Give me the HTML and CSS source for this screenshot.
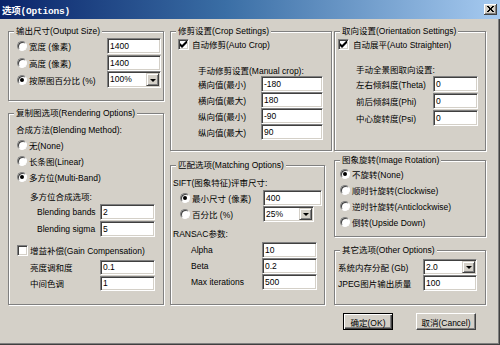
FILE: index.html
```html
<!DOCTYPE html>
<html>
<head>
<meta charset="utf-8">
<link rel="stylesheet" href="styles.css">
</head>
<body>
<div class="win">
  <div class="titlebar">
    <span class="title">选项(Options)</span>
    <span class="close"><svg width="7" height="6" viewBox="0 0 7 6"><path d="M0 0L6 6M1 0L7 6M6 0L0 6M7 0L1 6" stroke="#000" stroke-width="1"/></svg></span>
  </div>
  <div class="cols">
    <div class="col c1">
      <div class="group g-out">
        <span class="gtitle">输出尺寸(Output Size)</span>
        <div class="row r17"><span class="radio"></span><span class="lbl w78">宽度 (像素)</span><span class="field w54">1400</span></div>
        <div class="row r17"><span class="radio"></span><span class="lbl w78">高度 (像素)</span><span class="field w54">1400</span></div>
        <div class="row r17"><span class="radio on"></span><span class="lbl w78">按原图百分比 (%)</span><span class="combo w54 h17"><span class="ctext">100%</span><span class="drop"><i class="tri"></i></span></span></div>
      </div>
      <div class="group g-render">
        <span class="gtitle">复制图选项(Rendering Options)</span>
        <div class="row">合成方法(Blending Method):</div>
        <div class="row ml1"><span class="radio"></span><span class="lbl">无(None)</span></div>
        <div class="row ml1"><span class="radio"></span><span class="lbl">长条图(Linear)</span></div>
        <div class="row ml1"><span class="radio on"></span><span class="lbl">多方位(Multi-Band)</span></div>
        <div class="row ml14 mt3">多方位合成选项:</div>
        <div class="row ml21"><span class="lbl w63">Blending bands</span><span class="field w55">2</span></div>
        <div class="row ml21 mt1"><span class="lbl w63">Blending sigma</span><span class="field w55">5</span></div>
        <div class="row ml1 mt5"><span class="check"></span><span class="lbl">增益补偿(Gain Compensation)</span></div>
        <div class="row ml14 mt1"><span class="lbl w70">亮度调和度</span><span class="field w55 h15">0.1</span></div>
        <div class="row ml14"><span class="lbl w70">中间色调</span><span class="field w55 h15">1</span></div>
      </div>
    </div>
    <div class="col c2">
      <div class="group g-crop">
        <span class="gtitle">修剪设置(Crop Settings)</span>
        <div class="row"><span class="check on"><svg width="7" height="7" viewBox="0 0 7 7"><path d="M0 2v3l2 2 5-5V-1L2 4z" fill="#000"/></svg></span><span class="lbl gap3">自动修剪(Auto Crop)</span></div>
        <div class="row head ml20">手动修剪设置(Manual crop):</div>
        <div class="row ml20"><span class="lbl w63">横向值(最小)</span><span class="field w62">-180</span></div>
        <div class="row ml20"><span class="lbl w63">横向值(最大)</span><span class="field w62">180</span></div>
        <div class="row ml20"><span class="lbl w63">纵向值(最小)</span><span class="field w62">-90</span></div>
        <div class="row ml20"><span class="lbl w63">纵向值(最大)</span><span class="field w62">90</span></div>
      </div>
      <div class="group g-match">
        <span class="gtitle">匹配选项(Matching Options)</span>
        <div class="row">SIFT(图象特征)评审尺寸:</div>
        <div class="row ml7"><span class="radio on"></span><span class="lbl w71">最小尺寸 (像素)</span><span class="field w59">400</span></div>
        <div class="row ml7"><span class="radio"></span><span class="lbl w71">百分比 (%)</span><span class="combo w51 h16"><span class="ctext">25%</span><span class="drop"><i class="tri"></i></span></span></div>
        <div class="row mt3">RANSAC参数:</div>
        <div class="row ml18 mt1"><span class="lbl w71">Alpha</span><span class="field w55">10</span></div>
        <div class="row ml18"><span class="lbl w71">Beta</span><span class="field w55">0.2</span></div>
        <div class="row ml18"><span class="lbl w71">Max iterations</span><span class="field w55">500</span></div>
      </div>
    </div>
    <div class="col c3">
      <div class="group g-orient">
        <span class="gtitle">取向设置(Orientation Settings)</span>
        <div class="row"><span class="check on"><svg width="7" height="7" viewBox="0 0 7 7"><path d="M0 2v3l2 2 5-5V-1L2 4z" fill="#000"/></svg></span><span class="lbl gap4">自动展平(Auto Straighten)</span></div>
        <div class="row head2 ml18">手动全景图取向设置:</div>
        <div class="row r17 ml18"><span class="lbl w77">左右倾斜度(Theta)</span><span class="field w45">0</span></div>
        <div class="row r17 ml18"><span class="lbl w77">前后倾斜度(Phi)</span><span class="field w45">0</span></div>
        <div class="row r17 ml18"><span class="lbl w77">中心旋转度(Psi)</span><span class="field w45">0</span></div>
      </div>
      <div class="group g-rot">
        <span class="gtitle">图象旋转(Image Rotation)</span>
        <div class="row ml2"><span class="radio on"></span><span class="lbl gap3">不旋转(None)</span></div>
        <div class="row ml2"><span class="radio"></span><span class="lbl gap3">顺时针旋转(Clockwise)</span></div>
        <div class="row ml2"><span class="radio"></span><span class="lbl gap3">逆时针旋转(Anticlockwise)</span></div>
        <div class="row ml2"><span class="radio"></span><span class="lbl gap3">倒转(Upside Down)</span></div>
      </div>
      <div class="group g-other">
        <span class="gtitle">其它选项(Other Options)</span>
        <div class="row"><span class="lbl w85">系统内存分配 (Gb)</span><span class="combo w54 h16"><span class="ctext">2.0</span><span class="drop"><i class="tri"></i></span></span></div>
        <div class="row"><span class="lbl w85">JPEG图片输出质量</span><span class="field w54">100</span></div>
      </div>
      <div class="buttons">
        <span class="btn default">确定(OK)</span>
        <span class="btn cancel">取消(Cancel)</span>
      </div>
    </div>
  </div>
</div>
</body>
</html>
```
FILE: styles.css
```css
html, body { margin: 0; padding: 0; }
body {
  width: 500px;
  height: 345px;
  overflow: hidden;
  background: #d4d0c8;
  font-family: "Liberation Sans", "Noto Sans CJK SC", sans-serif;
  font-size: 8.5px;
  color: #000;
}
.win {
  width: 500px;
  height: 345px;
  box-sizing: border-box;
  background: #d4d0c8;
  box-shadow: inset -1px -1px #404040, inset -2px -2px #808080;
}
.titlebar {
  height: 19px;
  display: flex;
  align-items: center;
  background: linear-gradient(to right, #0a246a 0%, #3a6ea5 45%, #a6caf0 100%);
}
.title {
  color: #fff;
  font-family: "Liberation Mono", "Noto Sans CJK SC", monospace;
  font-weight: bold;
  font-size: 9.5px;
  padding-left: 2px;
  letter-spacing: -0.2px;
}
.close {
  margin-left: auto;
  margin-right: 3px;
  width: 13px;
  height: 11px;
  box-sizing: border-box;
  background: #d4d0c8;
  border-right: 1px solid #404040;
  border-bottom: 1px solid #404040;
  box-shadow: inset 1px 1px #fff, inset -1px -1px #808080;
  display: flex;
  align-items: center;
  justify-content: center;
}
.close svg { display: block; }
.cols {
  display: flex;
  padding: 12px 0 0 8px;
}
.col { display: flex; flex-direction: column; }
.c1 { width: 156px; margin-right: 6px; }
.c2 { width: 162px; margin-right: 2px; }
.c3 { width: 152px; }
.group {
  position: relative;
  box-sizing: border-box;
  border: 1px solid #808080;
  box-shadow: inset 1px 1px #fff, 1px 1px #fff;
}
.gtitle {
  position: absolute;
  top: -7px;
  left: 5px;
  padding: 0 2px;
  line-height: 12px;
  background: #d4d0c8;
  white-space: nowrap;
}
.g-out { height: 70px; padding: 5px 2px 0 8px; }
.g-render { height: 192px; margin-top: 12px; padding: 7px 0 0 7px; }
.g-crop { height: 120px; padding: 4px 0 0 7px; }
.g-match { width: 155px; height: 140px; margin-top: 14px; padding: 8px 0 0 2px; }
.g-orient { height: 120px; padding: 4px 0 0 3px; }
.g-rot { height: 77px; margin-top: 9px; padding: 5px 0 0 3px; }
.g-other { height: 55px; margin-top: 13px; padding: 8px 0 0 3px; }

.row {
  display: flex;
  align-items: center;
  height: 16px;
  white-space: nowrap;
}
.r17 { height: 17px; }
.head { height: 12px; margin-top: 12px; }
.head2 { height: 12px; margin-top: 11px; }
.ml1 { margin-left: 1px; }
.ml2 { margin-left: 2px; }
.ml7 { margin-left: 7px; }
.ml14 { margin-left: 14px; }
.ml18 { margin-left: 18px; }
.ml20 { margin-left: 20px; }
.ml21 { margin-left: 21px; }
.mt1 { margin-top: 1px; }
.mt3 { margin-top: 3px; }
.mt5 { margin-top: 5px; }

.lbl { display: block; margin-left: 2px; }
.radio + .lbl { margin-left: 2px; }
.gap3 { margin-left: 3px; }
.gap4 { margin-left: 4px; }
.row > .lbl:first-child { margin-left: 0; }
.w63 { width: 63px; }
.w70 { width: 70px; }
.w71 { width: 71px; }
.w77 { width: 77px; }
.w78 { width: 78px; }
.w85 { width: 85px; }
.radio + .w78 { width: 78px; }
.radio + .w71 { width: 71px; }

.field, .combo {
  box-sizing: border-box;
  height: 16px;
  background: #fff;
  border-top: 1px solid #808080;
  border-left: 1px solid #808080;
  border-right: 1px solid #fff;
  border-bottom: 1px solid #fff;
  box-shadow: inset 1px 1px #404040, inset -1px -1px #d4d0c8;
  line-height: 14px;
  padding-left: 2px;
  flex: none;
}
.h15 { height: 15px; line-height: 13px; }
.h16 { height: 16px; }
.h17 { height: 17px; }
.w45 { width: 45px; }
.w51 { width: 51px; }
.w54 { width: 54px; }
.w55 { width: 55px; }
.w59 { width: 59px; }
.w62 { width: 62px; }
.combo {
  display: flex;
  align-items: stretch;
  padding: 1px 1px 1px 2px;
}
.ctext { flex: 1; line-height: 13px; }
.drop {
  width: 13px;
  box-sizing: border-box;
  background: #d4d0c8;
  border-top: 1px solid #d4d0c8;
  border-left: 1px solid #d4d0c8;
  border-right: 1px solid #404040;
  border-bottom: 1px solid #404040;
  box-shadow: inset 1px 1px #fff, inset -1px -1px #808080;
  display: flex;
  align-items: center;
  justify-content: center;
}
.tri {
  display: block;
  width: 0;
  height: 0;
  border-left: 3px solid transparent;
  border-right: 3px solid transparent;
  border-top: 3px solid #000;
  margin-top: 1px;
}

.radio {
  flex: none;
  position: relative;
  width: 10px;
  height: 10px;
  box-sizing: border-box;
  border-radius: 50%;
  background: #fff;
  border: 1px solid;
  border-color: #808080 #fff #fff #808080;
  box-shadow: inset 1px 1px #404040;
}
.radio.on::after {
  content: "";
  position: absolute;
  left: 2px;
  top: 2px;
  width: 4px;
  height: 4px;
  border-radius: 50%;
  background: #000;
}
.check {
  flex: none;
  width: 11px;
  height: 11px;
  box-sizing: border-box;
  background: #fff;
  border: 1px solid;
  border-color: #808080 #fff #fff #808080;
  box-shadow: inset 1px 1px #404040, inset -1px -1px #d4d0c8;
  display: flex;
  align-items: center;
  justify-content: center;
}
.check svg { display: block; }

.buttons {
  display: flex;
  margin-top: 8px;
  padding-left: 9px;
  gap: 23px;
}
.btn {
  box-sizing: border-box;
  height: 17px;
  display: flex;
  align-items: center;
  justify-content: center;
  background: #d4d0c8;
  border: 1px solid;
  border-color: #fff #404040 #404040 #fff;
  box-shadow: inset -1px -1px #808080;
  white-space: nowrap;
}
.btn.default {
  width: 50px;
  border-color: #000;
  box-shadow: inset 1px 1px #fff, inset -1px -1px #404040, inset -2px -2px #808080;
}
.btn.cancel { width: 60px; }
```
